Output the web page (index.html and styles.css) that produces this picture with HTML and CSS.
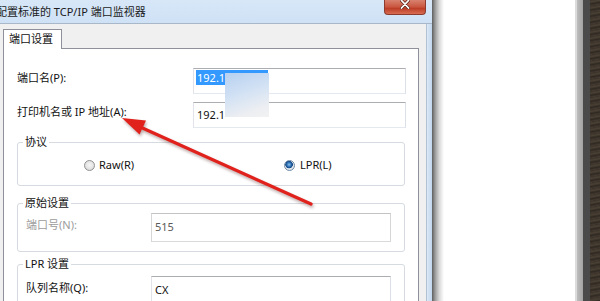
FILE: index.html
```html
<!DOCTYPE html>
<html lang="zh-CN">
<head>
<meta charset="utf-8">
<title>配置标准的 TCP/IP 端口监视器</title>
<link rel="stylesheet" href="styles.css">
</head>
<body>
<div class="screen">
  <div class="window">
    <div class="titlebar">
      <span class="title">配置标准的 TCP/IP 端口监视器</span>
      <div class="close">
        <svg width="10" height="9" viewBox="0 0 10 9"><path d="M1.5 0.5 L8.5 8 M8.5 0.5 L1.5 8" stroke="#5a2418" stroke-width="3.2" stroke-linecap="round"/><path d="M1.5 0.5 L8.5 8 M8.5 0.5 L1.5 8" stroke="#ffffff" stroke-width="1.8" stroke-linecap="round"/></svg>
      </div>
    </div>
    <div class="frame-body">
      <div class="client">
        <div class="tabs"><div class="tab">端口设置</div></div>
        <div class="panel">
          <div class="row r1"><span class="label">端口名(P):</span><div class="input"><span class="sel">192.1</span></div></div>
          <div class="row r2"><span class="label">打印机名或 IP 地址(A):</span><div class="input">192.1</div></div>
          <fieldset class="group g1"><legend>协议</legend>
            <div class="radios">
              <span class="radio"><i class="dot"></i>Raw(R)</span>
              <span class="radio on"><i class="dot"></i>LPR(L)</span>
            </div>
          </fieldset>
          <fieldset class="group g2"><legend>原始设置</legend>
            <div class="grow"><span class="label dis">端口号(N):</span><div class="input tall disabled">515</div></div>
          </fieldset>
          <fieldset class="group g3"><legend>LPR 设置</legend>
            <div class="grow"><span class="label">队列名称(Q):</span><div class="input tall">CX</div></div>
          </fieldset>
        </div>
      </div>
      <div class="frame-right"></div>
    </div>
  </div>
  <div class="shadow"></div>
  <div class="desk"></div>
  <div class="edge-light"></div>
  <div class="edge-gray"></div>
  <div class="edge-dark"></div>
  <div class="edge-brown"></div>
  <div class="blur"></div>
  <svg class="arrow" width="600" height="301" viewBox="0 0 600 301">
    <line x1="311" y1="204" x2="138" y2="126" stroke="#e1221c" stroke-width="3.2" stroke-linecap="round"/>
    <polygon points="122,118 146,120.5 139.5,134.5" fill="#e1221c"/>
  </svg>
</div>
</body>
</html>
```
FILE: styles.css
```css
html, body {
  margin: 0;
  padding: 0;
  background: #ffffff;
}

.screen {
  position: relative;
  display: flex;
  width: 600px;
  height: 301px;
  overflow: hidden;
  font-family: "Noto Sans", "Noto Sans CJK SC", sans-serif;
  font-size: 11px;
  color: #111;
}

.window {
  display: flex;
  flex-direction: column;
  width: 432px;
  flex: none;
  height: 301px;
  overflow: hidden;
}

.titlebar {
  display: flex;
  justify-content: space-between;
  align-items: flex-start;
  height: 23px;
  border-bottom: 1px solid #a9b8c9;
  background: linear-gradient(to bottom, #d7e7f8, #cfe1f5);
  flex: none;
}

.title {
  margin-left: -4px;
  line-height: 24px;
  white-space: nowrap;
  color: #1b1b1b;
}

.close {
  display: flex;
  justify-content: center;
  align-items: flex-start;
  box-sizing: border-box;
  width: 42px;
  height: 15px;
  margin-right: 6px;
  border: 1px solid #8c3b2e;
  border-top: none;
  border-radius: 0 0 4px 4px;
  background: linear-gradient(to bottom, #d8826f 0%, #c9553f 50%, #bd3e28 60%, #d76c52 100%);
}

.frame-body {
  display: flex;
  flex: 1;
}

.client {
  box-sizing: border-box;
  width: 427px;
  padding: 5px 0 0 3px;
  background: #f0f0f0;
  border-right: 1px solid #b3c2d2;
}

.frame-right {
  flex: 1;
  background: linear-gradient(to right, #dbe8f6, #c2d7ee);
}

.tabs {
  display: flex;
  height: 19px;
}

.tab {
  position: relative;
  z-index: 1;
  box-sizing: border-box;
  width: 59px;
  height: 20px;
  padding-left: 5px;
  border: 1px solid #8e9199;
  border-bottom: none;
  background: #ffffff;
  line-height: 18px;
  white-space: nowrap;
}

.panel {
  box-sizing: border-box;
  width: 416px;
  height: 300px;
  padding: 19px 0 0 13px;
  border: 1px solid #8e9199;
  background: #ffffff;
}

.row {
  display: flex;
  height: 26px;
}

.r2 {
  margin-top: 8px;
}

.label {
  width: 176px;
  padding-top: 2px;
  line-height: 16px;
  white-space: nowrap;
  flex: none;
}

.input {
  box-sizing: border-box;
  width: 213px;
  height: 26px;
  padding-left: 3px;
  border: 1px solid;
  border-color: #abadb3 #dbdfe6 #e3e9ef #e2e3ea;
  line-height: 24px;
  white-space: nowrap;
  color: #111;
}

.sel {
  display: inline-block;
  vertical-align: top;
  width: 72px;
  height: 15px;
  margin: 1px 0 0 -1px;
  padding-left: 1px;
  box-sizing: border-box;
  line-height: 15px;
  background: #3399ff;
  color: #ffffff;
}

.group {
  box-sizing: border-box;
  width: 388px;
  margin: 0;
  padding: 0;
  min-inline-size: 0;
  border: 1px solid #d5dbe0;
  border-radius: 3px;
}

.group legend {
  margin-left: 5px;
  padding: 0 2px;
  line-height: 16px;
  color: #111;
}

.g1 {
  margin-top: 6px;
  padding: 7px 0 12px;
}

.g2 {
  margin-top: 9px;
  padding: 2px 0 9px;
}

.g3 {
  margin-top: 4px;
  padding: 4px 0 0;
}

.radios {
  display: grid;
  grid-template-columns: 200px auto;
  padding-left: 66px;
  height: 16px;
  line-height: 16px;
}

.radio {
  display: flex;
  align-items: center;
  white-space: nowrap;
}

.dot {
  box-sizing: border-box;
  width: 11px;
  height: 11px;
  margin-right: 4px;
  border: 1px solid #8f9091;
  border-radius: 50%;
  background: radial-gradient(circle at 50% 45%, #f6f6f6 0%, #e4e4e4 55%, #cfcfcf 100%);
}

.radio.on .dot {
  margin-right: 5px;
  border-color: #6e8aa6;
  background: radial-gradient(circle at 45% 40%, #8fc4ee 0%, #2b6fb4 30%, #13457e 48%, #e8ecf0 55%, #d2d7dc 100%);
}

.grow {
  display: flex;
  padding-left: 8px;
}

.grow .label {
  width: 125px;
  padding-top: 4px;
}

.input.tall {
  width: 240px;
  height: 29px;
  line-height: 26px;
}

.label.dis {
  color: #9c9c9c;
}

.input.disabled {
  border-color: #c3c3c3 #d6d6d6 #dadada #d6d6d6;
  color: #5a5a5a;
}

.shadow {
  flex: none;
  width: 12px;
  background: linear-gradient(to right, #5e5e5e 0%, #9a9a9a 25%, #d8d8d8 60%, #ffffff 100%);
}

.desk {
  flex: none;
  width: 131px;
  background: #ffffff;
}

.edge-light {
  flex: none;
  width: 2px;
  background: #dcdcdc;
}

.edge-gray {
  flex: none;
  width: 6px;
  background: linear-gradient(to right, #bdbdbd, #a3a3a3);
}

.edge-dark {
  flex: none;
  width: 7px;
  background: #4a4a4a;
}

.edge-brown {
  flex: 1;
  background: repeating-linear-gradient(170deg, #3a322a 0px, #4a4034 2px, #2f2922 4px, #453b31 6px);
}

.blur {
  position: absolute;
  left: 225px;
  top: 73px;
  width: 44px;
  height: 44px;
  background: linear-gradient(160deg, #b6d0f0 0%, #d3e2f4 45%, #eceef2 80%, #f2f2f2 100%);
  filter: blur(0.6px);
}

.arrow {
  position: absolute;
  left: 0;
  top: 0;
  pointer-events: none;
  filter: drop-shadow(1px 2px 1.5px rgba(60, 0, 0, 0.35));
}
```
